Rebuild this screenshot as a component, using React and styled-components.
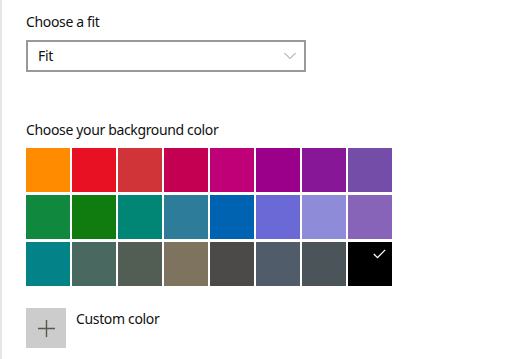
import React from "react";
import styled, { createGlobalStyle } from "styled-components";

const colors = [
  "#FF8C00", "#E81123", "#D13438", "#C30052", "#BF0077", "#9A0089", "#881798", "#744DA9",
  "#10893E", "#107C10", "#018574", "#2D7D9A", "#0063B1", "#6B69D6", "#8E8CD8", "#8764B8",
  "#038387", "#486860", "#525E54", "#7E735F", "#4C4A48", "#515C6B", "#4A5459", "#000000",
];

const GlobalStyle = createGlobalStyle`
  html, body {
    margin: 0;
    padding: 0;
    background: #fff;
  }
  body {
    font-family: "Noto Sans", "Open Sans", sans-serif;
    color: #111;
  }
`;

const App = () => {
  return (
    <>
      <GlobalStyle />
      <Page>
        <Content>
          <Label>Choose a fit</Label>
          <Select>
            <SelectText>Fit</SelectText>
            <svg width="12" height="8" viewBox="0 0 12 8">
              <path d="M0.5 1 L6 6.5 L11.5 1" fill="none" stroke="#8a8a8a" strokeWidth="1" />
            </svg>
          </Select>

          <SectionLabel>Choose your background color</SectionLabel>
          <Grid>
            {colors.map((c, i) => (
              <Swatch key={i} color={c}>
                {i === colors.length - 1 && (
                  <Check width="13" height="10" viewBox="0 0 13 10">
                    <path d="M0.8 5 L4.5 8.6 L12.2 0.9" fill="none" stroke="#fff" strokeWidth="1.3" />
                  </Check>
                )}
              </Swatch>
            ))}
          </Grid>

          <CustomRow>
            <CustomBox>
              <svg width="17" height="17" viewBox="0 0 17 17">
                <path d="M8.5 0 V17 M0 8.5 H17" stroke="#5a5650" strokeWidth="1.4" />
              </svg>
            </CustomBox>
            <CustomText>Custom color</CustomText>
          </CustomRow>
        </Content>
      </Page>
    </>
  );
};

const Page = styled.div`
  display: flex;
  min-height: 359px;
  border-left: 2px solid #e6e6e6;
  box-sizing: border-box;
`;

const Content = styled.div`
  display: flex;
  flex-direction: column;
  padding: 12px 0 0 24px;
`;

const Label = styled.div`
  font-size: 14px;
  line-height: 20px;
  letter-spacing: -0.35px;
  margin-bottom: 8px;
`;

const Select = styled.div`
  display: flex;
  align-items: center;
  justify-content: space-between;
  width: 280px;
  height: 32px;
  box-sizing: border-box;
  border: 2px solid #999;
  padding: 0 8px 0 10px;
`;

const SelectText = styled.span`
  font-size: 14px;
  line-height: 20px;
  letter-spacing: -0.35px;
`;

const SectionLabel = styled(Label)`
  margin-top: 48px;
`;

const Grid = styled.div`
  display: grid;
  grid-template-columns: repeat(8, 44px);
  grid-auto-rows: 44px;
  column-gap: 2px;
  row-gap: 3px;
`;

const Swatch = styled.div`
  position: relative;
  background: ${(props) => props.color};
`;

const Check = styled.svg`
  position: absolute;
  top: 7px;
  right: 6px;
`;

const CustomRow = styled.div`
  display: flex;
  align-items: flex-start;
  margin-top: 22px;
`;

const CustomBox = styled.div`
  display: flex;
  align-items: center;
  justify-content: center;
  width: 40px;
  height: 40px;
  background: #ccc;
`;

const CustomText = styled.div`
  font-size: 14px;
  line-height: 20px;
  letter-spacing: -0.35px;
  margin: 1px 0 0 10px;
`;

export default App;
